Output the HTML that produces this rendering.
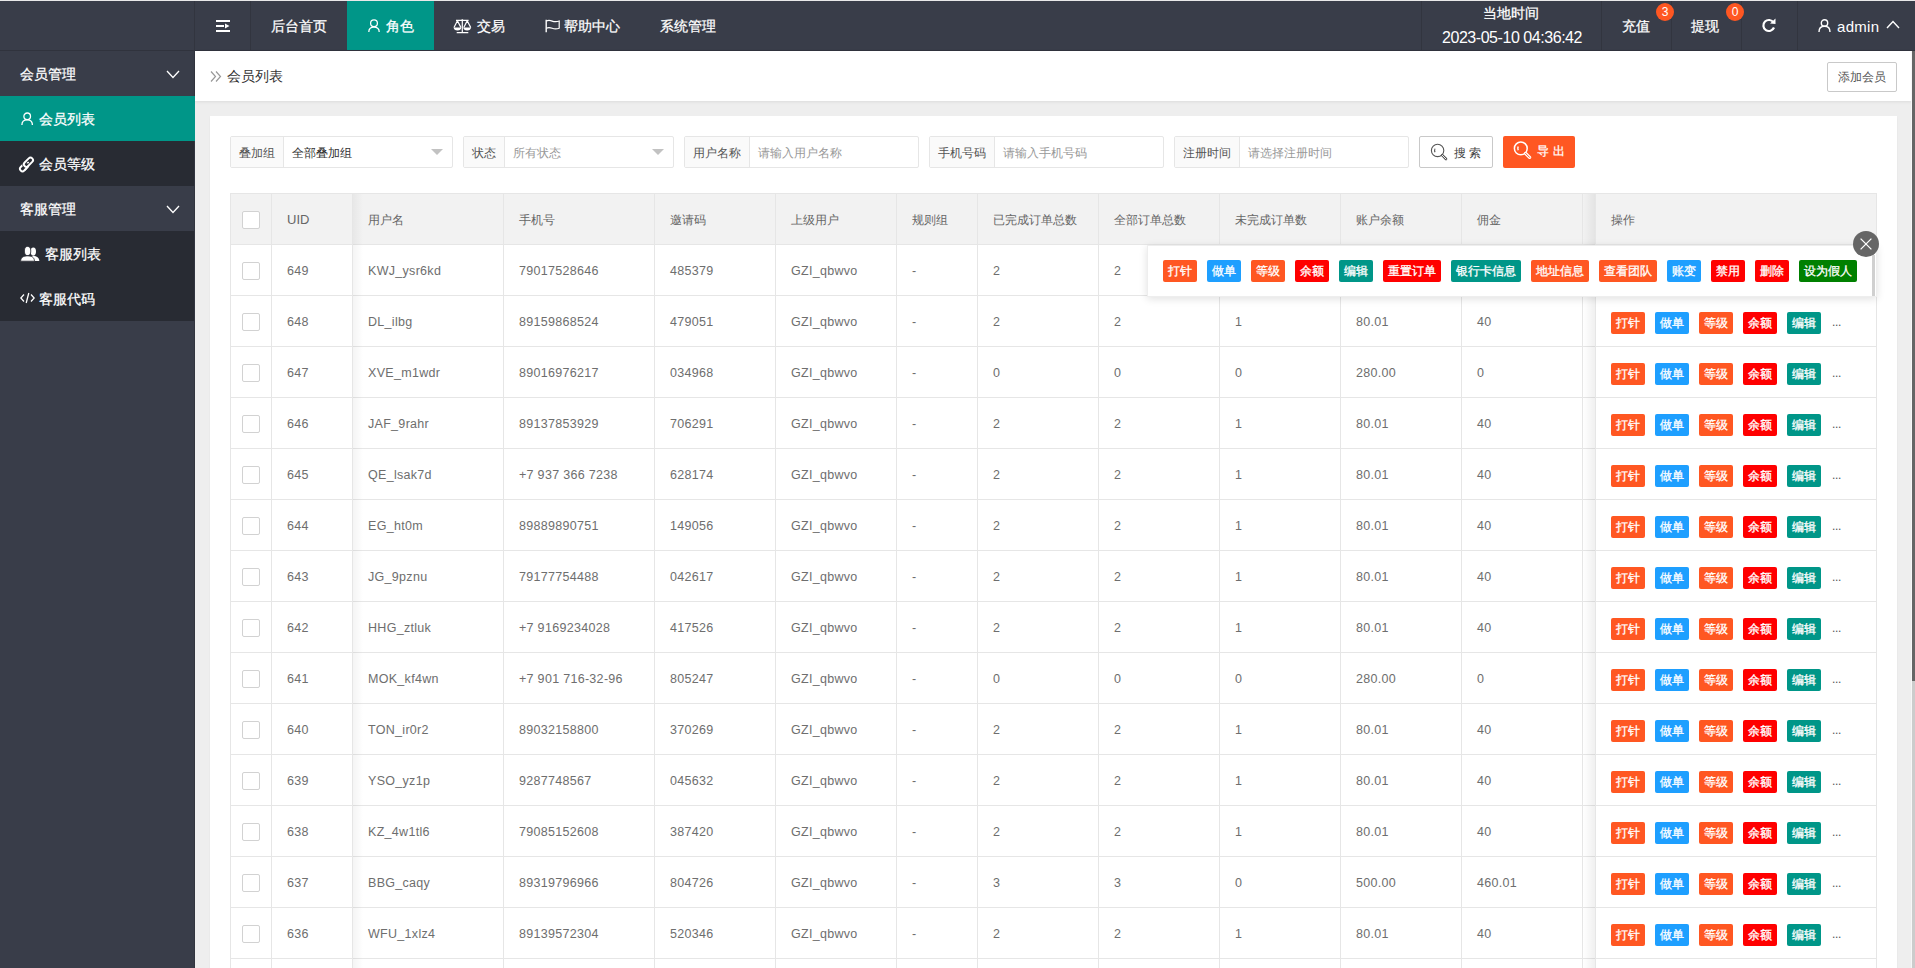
<!DOCTYPE html><html><head><meta charset="utf-8"><style>
*{margin:0;padding:0;box-sizing:border-box}
html,body{width:1915px;height:968px;overflow:hidden;background:#eeeeee;font-family:"Liberation Sans",sans-serif;color:#666}
.a{position:absolute}
.bx{position:absolute;height:22px;line-height:23px;font-size:12px;color:#fff;-webkit-text-stroke:0.3px #fff;text-align:center;border-radius:2px;white-space:nowrap}
.t{position:absolute;white-space:nowrap}
.cb{position:absolute;width:18px;height:18px;border:1px solid #d2d2d2;border-radius:2px;background:#fff}
.hl{position:absolute;height:1px;background:#e6e6e6}
.vl{position:absolute;width:1px;background:#e6e6e6}
.w{color:#fff;-webkit-text-stroke:0.25px #fff}
</style></head><body>

<div class="a" style="left:0;top:0;width:1915px;height:1px;background:#e9e9e9"></div>
<div class="a" style="left:0;top:1px;width:1915px;height:50px;background:#393D49"></div>
<div class="a" style="left:0;top:50px;width:1915px;height:1px;background:#30333d"></div>
<div class="a" style="left:0;top:51px;width:195px;height:917px;background:#393D49"></div>
<div class="a" style="left:194px;top:1px;width:1px;height:967px;background:#32353f"></div>
<div class="a" style="left:250px;top:1px;width:1px;height:49px;background:#32353f"></div>
<div class="a" style="left:1421px;top:1px;width:1px;height:49px;background:#32353f"></div>
<div class="a" style="left:1601px;top:1px;width:1px;height:49px;background:#32353f"></div>
<div class="a" style="left:1671px;top:1px;width:1px;height:49px;background:#32353f"></div>
<div class="a" style="left:1741px;top:1px;width:1px;height:49px;background:#32353f"></div>
<div class="a" style="left:1797px;top:1px;width:1px;height:49px;background:#32353f"></div>
<div class="a" style="left:347px;top:1px;width:87px;height:49px;background:#009688"></div>
<svg class="a" style="left:216px;top:19px" width="15" height="14" viewBox="0 0 15 14">
<rect x="0" y="1" width="14" height="2" fill="#fff"/><rect x="0" y="6" width="8" height="2" fill="#fff"/>
<path d="M9 4.5 L13.5 7 L9 9.5 Z" fill="#fff"/><rect x="0" y="11" width="14" height="2" fill="#fff"/></svg>
<div class="t w" style="left:271px;top:17px;font-size:14px;line-height:18px">后台首页</div>
<svg class="a" style="left:368px;top:19px" width="12" height="13" viewBox="0 0 12 13" fill="none" stroke="#fff" stroke-width="1.25">
<circle cx="6" cy="4.3" r="3.4"/><path d="M0.8 12.9 C0.8 9.7 3 8 6 8 C9 8 11.2 9.7 11.2 12.9"/></svg>
<div class="t w" style="left:386px;top:17px;font-size:14px;line-height:18px">角色</div>
<svg class="a" style="left:453px;top:19px" width="19" height="15" viewBox="0 0 19 15" fill="none" stroke="#fff" stroke-width="1.2">
<path d="M3 1.4 H15.6 M9.3 1.4 V13.5 M3.7 13.6 H15.3" /><circle cx="9.3" cy="1.3" r="1" fill="#fff" stroke="none"/>
<path d="M4.4 1.8 L1 8.6 M4.4 1.8 L8 8.6 M14.2 1.8 L10.8 8.6 M14.2 1.8 L17.8 8.6"/>
<path d="M0.6 8.4 H8.3 Q8 11.4 4.45 11.4 Q0.9 11.4 0.6 8.4 Z M10.3 8.4 H18 Q17.7 11.4 14.15 11.4 Q10.6 11.4 10.3 8.4 Z" fill="#fff" stroke="none"/></svg>
<div class="t w" style="left:477px;top:17px;font-size:14px;line-height:18px">交易</div>
<svg class="a" style="left:545px;top:19px" width="16" height="14" viewBox="0 0 16 14" fill="none" stroke="#fff" stroke-width="1.2">
<path d="M1.2 0.8 V13.2" stroke-width="1.4"/><path d="M1.2 2 Q4 0.9 7.2 2.1 Q10.6 3.3 14.2 2 V9.2 Q10.6 10.5 7.2 9.3 Q4 8.1 1.2 9.2"/></svg>
<div class="t w" style="left:564px;top:17px;font-size:14px;line-height:18px">帮助中心</div>
<div class="t w" style="left:660px;top:17px;font-size:14px;line-height:18px">系统管理</div>
<div class="t w" style="left:1483px;top:5px;font-size:14px;line-height:16px">当地时间</div>
<div class="t" style="color:#fff;left:1442px;top:30px;font-size:16px;line-height:16px;letter-spacing:-0.45px">2023-05-10 04:36:42</div>
<div class="t w" style="left:1622px;top:18px;font-size:14px;line-height:16px">充值</div>
<div class="a" style="left:1656px;top:3px;width:18px;height:18px;border-radius:9px;background:#FF5722;color:#fff;font-size:12px;line-height:18px;text-align:center">3</div>
<div class="t w" style="left:1691px;top:18px;font-size:14px;line-height:16px">提现</div>
<div class="a" style="left:1726px;top:3px;width:18px;height:18px;border-radius:9px;background:#FF5722;color:#fff;font-size:12px;line-height:18px;text-align:center">0</div>
<svg class="a" style="left:1761px;top:18px" width="16" height="15" viewBox="0 0 16 15" fill="none">
<path d="M12.5 4.5 A5.5 5.5 0 1 0 13 9.5" stroke="#fff" stroke-width="2.2"/><path d="M9 5.5 L14.5 6 L14.5 0.5 Z" fill="#fff"/></svg>
<svg class="a" style="left:1818px;top:19px" width="13" height="13" viewBox="0 0 13 13" fill="none" stroke="#fff" stroke-width="1.4">
<circle cx="6.5" cy="4" r="3.2"/><path d="M1 13 C1 9 3.5 7.3 6.5 7.3 C9.5 7.3 12 9 12 13"/></svg>
<div class="t" style="left:1837px;top:18px;font-size:15px;line-height:18px;color:#fff;letter-spacing:0.3px">admin</div>
<svg class="a" style="left:1886px;top:20px" width="14" height="9" viewBox="0 0 14 9" fill="none" stroke="#fff" stroke-width="1.4">
<path d="M1 8 L7 1.5 L13 8"/></svg>
<div class="a" style="left:0;top:51px;width:194px;height:45px;background:#393D49"></div>
<div class="a" style="left:0;top:141px;width:194px;height:45px;background:#282B33"></div>
<div class="a" style="left:0;top:186px;width:194px;height:45px;background:#393D49"></div>
<div class="a" style="left:0;top:231px;width:194px;height:45px;background:#282B33"></div>
<div class="a" style="left:0;top:276px;width:194px;height:45px;background:#282B33"></div>
<div class="a" style="left:0;top:96px;width:195px;height:45px;background:#009688"></div>
<div class="t w" style="left:20px;top:65px;font-size:14px;line-height:18px">会员管理</div>
<div class="t w" style="left:20px;top:200px;font-size:14px;line-height:18px">客服管理</div>
<svg class="a" style="left:166px;top:70px" width="14" height="9" viewBox="0 0 14 9" fill="none" stroke="#fff" stroke-width="1.3"><path d="M1 1 L7 7.5 L13 1"/></svg>
<svg class="a" style="left:166px;top:205px" width="14" height="9" viewBox="0 0 14 9" fill="none" stroke="#fff" stroke-width="1.3"><path d="M1 1 L7 7.5 L13 1"/></svg>
<svg class="a" style="left:21px;top:112px" width="12" height="13" viewBox="0 0 12 13" fill="none" stroke="#fff" stroke-width="1.3">
<circle cx="6.2" cy="4.3" r="3.3"/><path d="M0.9 13 C0.9 9.6 3.2 7.9 6.2 7.9 C9.2 7.9 11.4 9.6 11.4 13"/></svg>
<div class="t w" style="left:39px;top:110px;font-size:14px;line-height:18px">会员列表</div>
<svg class="a" style="left:18px;top:154px" width="19" height="19" viewBox="0 0 19 19" fill="none" stroke-width="1.9">
<g transform="translate(9.3 9.5) rotate(-45)">
<rect x="-9.6" y="-2.2" width="10.8" height="5" rx="2.5" stroke="#fff"/>
<path d="M-1.2 -2.6 H7.1 A2.5 2.5 0 0 1 7.1 2.4 H-1.2 A2.5 2.5 0 0 1 -1.2 -2.6" stroke="#282B33" stroke-width="3.4"/>
<rect x="-3.7" y="-2.6" width="10.8" height="5" rx="2.5" stroke="#fff"/>
<path d="M-6.5 2.8 H-1" stroke="#fff"/></g></svg>
<div class="t w" style="left:39px;top:155px;font-size:14px;line-height:18px">会员等级</div>
<svg class="a" style="left:20px;top:246px" width="20" height="16" viewBox="0 0 20 16" fill="#fff">
<ellipse cx="13.3" cy="5.6" rx="2.7" ry="4.1"/><path d="M10 15 C10 11.5 11.5 10 13.3 10 C16.8 10 19.2 11.8 19.3 15 Z"/>
<ellipse cx="7.6" cy="5" rx="3.2" ry="4.6" stroke="#282B33" stroke-width="0.8"/><path d="M0.6 15.2 C0.8 11.2 3.5 9.9 7.6 9.9 C11.7 9.9 14.3 11.2 14.5 15.2 Z" stroke="#282B33" stroke-width="0.8"/></svg>
<div class="t w" style="left:45px;top:245px;font-size:14px;line-height:18px">客服列表</div>
<svg class="a" style="left:20px;top:292px" width="15" height="12" viewBox="0 0 15 12" fill="none" stroke="#fff" stroke-width="1.3">
<path d="M4 2.5 L0.8 6 L4 9.5 M11 2.5 L14.2 6 L11 9.5 M8.8 1 L6.2 11"/></svg>
<div class="t w" style="left:39px;top:290px;font-size:14px;line-height:18px">客服代码</div>
<div class="a" style="left:195px;top:51px;width:1717px;height:50px;background:#fff;box-shadow:0 1px 3px rgba(0,0,0,.08)"></div>
<svg class="a" style="left:210px;top:71px" width="12" height="11" viewBox="0 0 12 11" fill="none" stroke="#999" stroke-width="1.2">
<path d="M1 0.5 L5.5 5.5 L1 10.5 M6 0.5 L10.5 5.5 L6 10.5"/></svg>
<div class="t" style="left:227px;top:67px;font-size:14px;line-height:18px;color:#333">会员列表</div>
<div class="a" style="left:1827px;top:62px;width:70px;height:30px;border:1px solid #C9C9C9;border-radius:2px;background:#fff;font-size:12px;line-height:28px;text-align:center;color:#555">添加会员</div>
<div class="a" style="left:210px;top:116px;width:1687px;height:900px;background:#fff;box-shadow:0 1px 2px rgba(0,0,0,.05)"></div>
<div class="a" style="left:230px;top:136px;width:223px;height:32px;border:1px solid #e6e6e6;border-radius:2px;background:#fff"></div>
<div class="a" style="left:231px;top:137px;width:53px;height:30px;background:#FAFAFA;border-right:1px solid #e6e6e6;font-size:12px;line-height:32px;text-align:center;color:#555">叠加组</div>
<div class="t" style="left:292px;top:138px;font-size:12px;line-height:30px;color:#333">全部叠加组</div>
<div class="a" style="left:431px;top:149px;width:0;height:0;border-left:6px solid transparent;border-right:6px solid transparent;border-top:6px solid #C2C2C2"></div>
<div class="a" style="left:463px;top:136px;width:211px;height:32px;border:1px solid #e6e6e6;border-radius:2px;background:#fff"></div>
<div class="a" style="left:464px;top:137px;width:41px;height:30px;background:#FAFAFA;border-right:1px solid #e6e6e6;font-size:12px;line-height:32px;text-align:center;color:#555">状态</div>
<div class="t" style="left:513px;top:138px;font-size:12px;line-height:30px;color:#999">所有状态</div>
<div class="a" style="left:652px;top:149px;width:0;height:0;border-left:6px solid transparent;border-right:6px solid transparent;border-top:6px solid #C2C2C2"></div>
<div class="a" style="left:684px;top:136px;width:235px;height:32px;border:1px solid #e6e6e6;border-radius:2px;background:#fff"></div>
<div class="a" style="left:685px;top:137px;width:65px;height:30px;background:#FAFAFA;border-right:1px solid #e6e6e6;font-size:12px;line-height:32px;text-align:center;color:#555">用户名称</div>
<div class="t" style="left:758px;top:138px;font-size:12px;line-height:30px;color:#999">请输入用户名称</div>
<div class="a" style="left:929px;top:136px;width:235px;height:32px;border:1px solid #e6e6e6;border-radius:2px;background:#fff"></div>
<div class="a" style="left:930px;top:137px;width:65px;height:30px;background:#FAFAFA;border-right:1px solid #e6e6e6;font-size:12px;line-height:32px;text-align:center;color:#555">手机号码</div>
<div class="t" style="left:1003px;top:138px;font-size:12px;line-height:30px;color:#999">请输入手机号码</div>
<div class="a" style="left:1174px;top:136px;width:235px;height:32px;border:1px solid #e6e6e6;border-radius:2px;background:#fff"></div>
<div class="a" style="left:1175px;top:137px;width:65px;height:30px;background:#FAFAFA;border-right:1px solid #e6e6e6;font-size:12px;line-height:32px;text-align:center;color:#555">注册时间</div>
<div class="t" style="left:1248px;top:138px;font-size:12px;line-height:30px;color:#999">请选择注册时间</div>
<div class="a" style="left:1419px;top:136px;width:74px;height:32px;border:1px solid #C9C9C9;border-radius:2px;background:#fff"></div>
<svg class="a" style="left:1430px;top:143px" width="18" height="18" viewBox="0 0 18 18" fill="none" stroke="#555" stroke-width="1.1">
<circle cx="7.6" cy="7.4" r="6.2"/><path d="M5 5.6 Q4.2 7.4 5 9.2"/><path d="M12.2 12.2 L16 16" stroke-width="2.6" stroke-linecap="round"/><path d="M12.2 12.2 L16 16" stroke="#fff" stroke-width="0.9" stroke-linecap="round"/></svg>
<div class="t" style="left:1454px;top:146px;font-size:12px;line-height:14px;color:#444">搜&nbsp;索</div>
<div class="a" style="left:1503px;top:136px;width:72px;height:32px;border-radius:2px;background:#FF5722"></div>
<svg class="a" style="left:1513px;top:141px" width="19" height="19" viewBox="0 0 19 19" fill="none" stroke="#fff" stroke-width="1.5">
<circle cx="7.8" cy="7.4" r="6.4"/><path d="M5.2 5.5 Q4.3 7.4 5.2 9.3"/><path d="M12.6 12.4 L16.6 16.4" stroke-width="3.2" stroke-linecap="round"/><path d="M12.6 12.4 L16.6 16.4" stroke="#FF5722" stroke-width="1" stroke-linecap="round"/></svg>
<div class="t w" style="left:1537px;top:144px;font-size:12px;line-height:14px;letter-spacing:4px">导出</div>
<div class="a" style="left:230px;top:193px;width:1647px;height:775px;border-left:1px solid #e6e6e6;border-top:1px solid #e6e6e6;border-right:1px solid #e6e6e6;background:#fff"></div>
<div class="a" style="left:231px;top:194px;width:1645px;height:50px;background:#f2f2f2"></div>
<div class="hl" style="left:230px;top:244px;width:1647px"></div>
<div class="hl" style="left:230px;top:295px;width:1647px"></div>
<div class="hl" style="left:230px;top:346px;width:1647px"></div>
<div class="hl" style="left:230px;top:397px;width:1647px"></div>
<div class="hl" style="left:230px;top:448px;width:1647px"></div>
<div class="hl" style="left:230px;top:499px;width:1647px"></div>
<div class="hl" style="left:230px;top:550px;width:1647px"></div>
<div class="hl" style="left:230px;top:601px;width:1647px"></div>
<div class="hl" style="left:230px;top:652px;width:1647px"></div>
<div class="hl" style="left:230px;top:703px;width:1647px"></div>
<div class="hl" style="left:230px;top:754px;width:1647px"></div>
<div class="hl" style="left:230px;top:805px;width:1647px"></div>
<div class="hl" style="left:230px;top:856px;width:1647px"></div>
<div class="hl" style="left:230px;top:907px;width:1647px"></div>
<div class="hl" style="left:230px;top:958px;width:1647px"></div>
<div class="hl" style="left:230px;top:1009px;width:1647px"></div>
<div class="vl" style="left:271px;top:193px;height:775px"></div>
<div class="vl" style="left:352px;top:193px;height:775px"></div>
<div class="vl" style="left:503px;top:193px;height:775px"></div>
<div class="vl" style="left:654px;top:193px;height:775px"></div>
<div class="vl" style="left:775px;top:193px;height:775px"></div>
<div class="vl" style="left:896px;top:193px;height:775px"></div>
<div class="vl" style="left:977px;top:193px;height:775px"></div>
<div class="vl" style="left:1098px;top:193px;height:775px"></div>
<div class="vl" style="left:1219px;top:193px;height:775px"></div>
<div class="vl" style="left:1340px;top:193px;height:775px"></div>
<div class="vl" style="left:1461px;top:193px;height:775px"></div>
<div class="vl" style="left:1582px;top:193px;height:775px"></div>
<div class="vl" style="left:1595px;top:193px;height:775px"></div>
<div class="a" style="left:353px;top:194px;width:10px;height:775px;background:linear-gradient(to right,rgba(0,0,0,.045),rgba(0,0,0,0))"></div>
<div class="a" style="left:1583px;top:194px;width:12px;height:50px;background:#f2f2f2"></div>
<div class="a" style="left:1583px;top:194px;width:12px;height:775px;background:linear-gradient(to left,rgba(0,0,0,.06),rgba(0,0,0,0))"></div>
<div class="cb" style="left:242px;top:211px"></div>
<div class="t" style="left:287px;top:195px;font-size:13px;line-height:50px;color:#666">UID</div>
<div class="t" style="left:368px;top:195px;font-size:12px;line-height:50px;color:#666">用户名</div>
<div class="t" style="left:519px;top:195px;font-size:12px;line-height:50px;color:#666">手机号</div>
<div class="t" style="left:670px;top:195px;font-size:12px;line-height:50px;color:#666">邀请码</div>
<div class="t" style="left:791px;top:195px;font-size:12px;line-height:50px;color:#666">上级用户</div>
<div class="t" style="left:912px;top:195px;font-size:12px;line-height:50px;color:#666">规则组</div>
<div class="t" style="left:993px;top:195px;font-size:12px;line-height:50px;color:#666">已完成订单总数</div>
<div class="t" style="left:1114px;top:195px;font-size:12px;line-height:50px;color:#666">全部订单总数</div>
<div class="t" style="left:1235px;top:195px;font-size:12px;line-height:50px;color:#666">未完成订单数</div>
<div class="t" style="left:1356px;top:195px;font-size:12px;line-height:50px;color:#666">账户余额</div>
<div class="t" style="left:1477px;top:195px;font-size:12px;line-height:50px;color:#666">佣金</div>
<div class="t" style="left:1611px;top:195px;font-size:12px;line-height:50px;color:#666">操作</div>
<div class="cb" style="left:242px;top:262px"></div>
<div class="t" style="left:287px;top:246px;font-size:12.5px;letter-spacing:0.3px;line-height:50px;color:#6e6e6e">649</div>
<div class="t" style="left:368px;top:246px;font-size:12.5px;letter-spacing:0.3px;line-height:50px;color:#6e6e6e">KWJ_ysr6kd</div>
<div class="t" style="left:519px;top:246px;font-size:12.5px;letter-spacing:0.3px;line-height:50px;color:#6e6e6e">79017528646</div>
<div class="t" style="left:670px;top:246px;font-size:12.5px;letter-spacing:0.3px;line-height:50px;color:#6e6e6e">485379</div>
<div class="t" style="left:791px;top:246px;font-size:12.5px;letter-spacing:0.3px;line-height:50px;color:#6e6e6e">GZI_qbwvo</div>
<div class="t" style="left:912px;top:246px;font-size:12.5px;letter-spacing:0.3px;line-height:50px;color:#6e6e6e">-</div>
<div class="t" style="left:993px;top:246px;font-size:12.5px;letter-spacing:0.3px;line-height:50px;color:#6e6e6e">2</div>
<div class="t" style="left:1114px;top:246px;font-size:12.5px;letter-spacing:0.3px;line-height:50px;color:#6e6e6e">2</div>
<div class="t" style="left:1235px;top:246px;font-size:12.5px;letter-spacing:0.3px;line-height:50px;color:#6e6e6e">1</div>
<div class="t" style="left:1356px;top:246px;font-size:12.5px;letter-spacing:0.3px;line-height:50px;color:#6e6e6e">80.01</div>
<div class="t" style="left:1477px;top:246px;font-size:12.5px;letter-spacing:0.3px;line-height:50px;color:#6e6e6e">40</div>
<div class="cb" style="left:242px;top:313px"></div>
<div class="t" style="left:287px;top:297px;font-size:12.5px;letter-spacing:0.3px;line-height:50px;color:#6e6e6e">648</div>
<div class="t" style="left:368px;top:297px;font-size:12.5px;letter-spacing:0.3px;line-height:50px;color:#6e6e6e">DL_ilbg</div>
<div class="t" style="left:519px;top:297px;font-size:12.5px;letter-spacing:0.3px;line-height:50px;color:#6e6e6e">89159868524</div>
<div class="t" style="left:670px;top:297px;font-size:12.5px;letter-spacing:0.3px;line-height:50px;color:#6e6e6e">479051</div>
<div class="t" style="left:791px;top:297px;font-size:12.5px;letter-spacing:0.3px;line-height:50px;color:#6e6e6e">GZI_qbwvo</div>
<div class="t" style="left:912px;top:297px;font-size:12.5px;letter-spacing:0.3px;line-height:50px;color:#6e6e6e">-</div>
<div class="t" style="left:993px;top:297px;font-size:12.5px;letter-spacing:0.3px;line-height:50px;color:#6e6e6e">2</div>
<div class="t" style="left:1114px;top:297px;font-size:12.5px;letter-spacing:0.3px;line-height:50px;color:#6e6e6e">2</div>
<div class="t" style="left:1235px;top:297px;font-size:12.5px;letter-spacing:0.3px;line-height:50px;color:#6e6e6e">1</div>
<div class="t" style="left:1356px;top:297px;font-size:12.5px;letter-spacing:0.3px;line-height:50px;color:#6e6e6e">80.01</div>
<div class="t" style="left:1477px;top:297px;font-size:12.5px;letter-spacing:0.3px;line-height:50px;color:#6e6e6e">40</div>
<div class="bx" style="left:1611px;top:312px;width:34px;background:#FF5722">打针</div>
<div class="bx" style="left:1655px;top:312px;width:34px;background:#1E9FFF">做单</div>
<div class="bx" style="left:1699px;top:312px;width:34px;background:#FF5722">等级</div>
<div class="bx" style="left:1743px;top:312px;width:34px;background:#FF0000">余额</div>
<div class="bx" style="left:1787px;top:312px;width:34px;background:#009688">编辑</div>
<div class="t" style="left:1832px;top:297px;font-size:12px;line-height:50px;color:#555;letter-spacing:-0.3px">...</div>
<div class="cb" style="left:242px;top:364px"></div>
<div class="t" style="left:287px;top:348px;font-size:12.5px;letter-spacing:0.3px;line-height:50px;color:#6e6e6e">647</div>
<div class="t" style="left:368px;top:348px;font-size:12.5px;letter-spacing:0.3px;line-height:50px;color:#6e6e6e">XVE_m1wdr</div>
<div class="t" style="left:519px;top:348px;font-size:12.5px;letter-spacing:0.3px;line-height:50px;color:#6e6e6e">89016976217</div>
<div class="t" style="left:670px;top:348px;font-size:12.5px;letter-spacing:0.3px;line-height:50px;color:#6e6e6e">034968</div>
<div class="t" style="left:791px;top:348px;font-size:12.5px;letter-spacing:0.3px;line-height:50px;color:#6e6e6e">GZI_qbwvo</div>
<div class="t" style="left:912px;top:348px;font-size:12.5px;letter-spacing:0.3px;line-height:50px;color:#6e6e6e">-</div>
<div class="t" style="left:993px;top:348px;font-size:12.5px;letter-spacing:0.3px;line-height:50px;color:#6e6e6e">0</div>
<div class="t" style="left:1114px;top:348px;font-size:12.5px;letter-spacing:0.3px;line-height:50px;color:#6e6e6e">0</div>
<div class="t" style="left:1235px;top:348px;font-size:12.5px;letter-spacing:0.3px;line-height:50px;color:#6e6e6e">0</div>
<div class="t" style="left:1356px;top:348px;font-size:12.5px;letter-spacing:0.3px;line-height:50px;color:#6e6e6e">280.00</div>
<div class="t" style="left:1477px;top:348px;font-size:12.5px;letter-spacing:0.3px;line-height:50px;color:#6e6e6e">0</div>
<div class="bx" style="left:1611px;top:363px;width:34px;background:#FF5722">打针</div>
<div class="bx" style="left:1655px;top:363px;width:34px;background:#1E9FFF">做单</div>
<div class="bx" style="left:1699px;top:363px;width:34px;background:#FF5722">等级</div>
<div class="bx" style="left:1743px;top:363px;width:34px;background:#FF0000">余额</div>
<div class="bx" style="left:1787px;top:363px;width:34px;background:#009688">编辑</div>
<div class="t" style="left:1832px;top:348px;font-size:12px;line-height:50px;color:#555;letter-spacing:-0.3px">...</div>
<div class="cb" style="left:242px;top:415px"></div>
<div class="t" style="left:287px;top:399px;font-size:12.5px;letter-spacing:0.3px;line-height:50px;color:#6e6e6e">646</div>
<div class="t" style="left:368px;top:399px;font-size:12.5px;letter-spacing:0.3px;line-height:50px;color:#6e6e6e">JAF_9rahr</div>
<div class="t" style="left:519px;top:399px;font-size:12.5px;letter-spacing:0.3px;line-height:50px;color:#6e6e6e">89137853929</div>
<div class="t" style="left:670px;top:399px;font-size:12.5px;letter-spacing:0.3px;line-height:50px;color:#6e6e6e">706291</div>
<div class="t" style="left:791px;top:399px;font-size:12.5px;letter-spacing:0.3px;line-height:50px;color:#6e6e6e">GZI_qbwvo</div>
<div class="t" style="left:912px;top:399px;font-size:12.5px;letter-spacing:0.3px;line-height:50px;color:#6e6e6e">-</div>
<div class="t" style="left:993px;top:399px;font-size:12.5px;letter-spacing:0.3px;line-height:50px;color:#6e6e6e">2</div>
<div class="t" style="left:1114px;top:399px;font-size:12.5px;letter-spacing:0.3px;line-height:50px;color:#6e6e6e">2</div>
<div class="t" style="left:1235px;top:399px;font-size:12.5px;letter-spacing:0.3px;line-height:50px;color:#6e6e6e">1</div>
<div class="t" style="left:1356px;top:399px;font-size:12.5px;letter-spacing:0.3px;line-height:50px;color:#6e6e6e">80.01</div>
<div class="t" style="left:1477px;top:399px;font-size:12.5px;letter-spacing:0.3px;line-height:50px;color:#6e6e6e">40</div>
<div class="bx" style="left:1611px;top:414px;width:34px;background:#FF5722">打针</div>
<div class="bx" style="left:1655px;top:414px;width:34px;background:#1E9FFF">做单</div>
<div class="bx" style="left:1699px;top:414px;width:34px;background:#FF5722">等级</div>
<div class="bx" style="left:1743px;top:414px;width:34px;background:#FF0000">余额</div>
<div class="bx" style="left:1787px;top:414px;width:34px;background:#009688">编辑</div>
<div class="t" style="left:1832px;top:399px;font-size:12px;line-height:50px;color:#555;letter-spacing:-0.3px">...</div>
<div class="cb" style="left:242px;top:466px"></div>
<div class="t" style="left:287px;top:450px;font-size:12.5px;letter-spacing:0.3px;line-height:50px;color:#6e6e6e">645</div>
<div class="t" style="left:368px;top:450px;font-size:12.5px;letter-spacing:0.3px;line-height:50px;color:#6e6e6e">QE_lsak7d</div>
<div class="t" style="left:519px;top:450px;font-size:12.5px;letter-spacing:0.3px;line-height:50px;color:#6e6e6e">+7 937 366 7238</div>
<div class="t" style="left:670px;top:450px;font-size:12.5px;letter-spacing:0.3px;line-height:50px;color:#6e6e6e">628174</div>
<div class="t" style="left:791px;top:450px;font-size:12.5px;letter-spacing:0.3px;line-height:50px;color:#6e6e6e">GZI_qbwvo</div>
<div class="t" style="left:912px;top:450px;font-size:12.5px;letter-spacing:0.3px;line-height:50px;color:#6e6e6e">-</div>
<div class="t" style="left:993px;top:450px;font-size:12.5px;letter-spacing:0.3px;line-height:50px;color:#6e6e6e">2</div>
<div class="t" style="left:1114px;top:450px;font-size:12.5px;letter-spacing:0.3px;line-height:50px;color:#6e6e6e">2</div>
<div class="t" style="left:1235px;top:450px;font-size:12.5px;letter-spacing:0.3px;line-height:50px;color:#6e6e6e">1</div>
<div class="t" style="left:1356px;top:450px;font-size:12.5px;letter-spacing:0.3px;line-height:50px;color:#6e6e6e">80.01</div>
<div class="t" style="left:1477px;top:450px;font-size:12.5px;letter-spacing:0.3px;line-height:50px;color:#6e6e6e">40</div>
<div class="bx" style="left:1611px;top:465px;width:34px;background:#FF5722">打针</div>
<div class="bx" style="left:1655px;top:465px;width:34px;background:#1E9FFF">做单</div>
<div class="bx" style="left:1699px;top:465px;width:34px;background:#FF5722">等级</div>
<div class="bx" style="left:1743px;top:465px;width:34px;background:#FF0000">余额</div>
<div class="bx" style="left:1787px;top:465px;width:34px;background:#009688">编辑</div>
<div class="t" style="left:1832px;top:450px;font-size:12px;line-height:50px;color:#555;letter-spacing:-0.3px">...</div>
<div class="cb" style="left:242px;top:517px"></div>
<div class="t" style="left:287px;top:501px;font-size:12.5px;letter-spacing:0.3px;line-height:50px;color:#6e6e6e">644</div>
<div class="t" style="left:368px;top:501px;font-size:12.5px;letter-spacing:0.3px;line-height:50px;color:#6e6e6e">EG_ht0m</div>
<div class="t" style="left:519px;top:501px;font-size:12.5px;letter-spacing:0.3px;line-height:50px;color:#6e6e6e">89889890751</div>
<div class="t" style="left:670px;top:501px;font-size:12.5px;letter-spacing:0.3px;line-height:50px;color:#6e6e6e">149056</div>
<div class="t" style="left:791px;top:501px;font-size:12.5px;letter-spacing:0.3px;line-height:50px;color:#6e6e6e">GZI_qbwvo</div>
<div class="t" style="left:912px;top:501px;font-size:12.5px;letter-spacing:0.3px;line-height:50px;color:#6e6e6e">-</div>
<div class="t" style="left:993px;top:501px;font-size:12.5px;letter-spacing:0.3px;line-height:50px;color:#6e6e6e">2</div>
<div class="t" style="left:1114px;top:501px;font-size:12.5px;letter-spacing:0.3px;line-height:50px;color:#6e6e6e">2</div>
<div class="t" style="left:1235px;top:501px;font-size:12.5px;letter-spacing:0.3px;line-height:50px;color:#6e6e6e">1</div>
<div class="t" style="left:1356px;top:501px;font-size:12.5px;letter-spacing:0.3px;line-height:50px;color:#6e6e6e">80.01</div>
<div class="t" style="left:1477px;top:501px;font-size:12.5px;letter-spacing:0.3px;line-height:50px;color:#6e6e6e">40</div>
<div class="bx" style="left:1611px;top:516px;width:34px;background:#FF5722">打针</div>
<div class="bx" style="left:1655px;top:516px;width:34px;background:#1E9FFF">做单</div>
<div class="bx" style="left:1699px;top:516px;width:34px;background:#FF5722">等级</div>
<div class="bx" style="left:1743px;top:516px;width:34px;background:#FF0000">余额</div>
<div class="bx" style="left:1787px;top:516px;width:34px;background:#009688">编辑</div>
<div class="t" style="left:1832px;top:501px;font-size:12px;line-height:50px;color:#555;letter-spacing:-0.3px">...</div>
<div class="cb" style="left:242px;top:568px"></div>
<div class="t" style="left:287px;top:552px;font-size:12.5px;letter-spacing:0.3px;line-height:50px;color:#6e6e6e">643</div>
<div class="t" style="left:368px;top:552px;font-size:12.5px;letter-spacing:0.3px;line-height:50px;color:#6e6e6e">JG_9pznu</div>
<div class="t" style="left:519px;top:552px;font-size:12.5px;letter-spacing:0.3px;line-height:50px;color:#6e6e6e">79177754488</div>
<div class="t" style="left:670px;top:552px;font-size:12.5px;letter-spacing:0.3px;line-height:50px;color:#6e6e6e">042617</div>
<div class="t" style="left:791px;top:552px;font-size:12.5px;letter-spacing:0.3px;line-height:50px;color:#6e6e6e">GZI_qbwvo</div>
<div class="t" style="left:912px;top:552px;font-size:12.5px;letter-spacing:0.3px;line-height:50px;color:#6e6e6e">-</div>
<div class="t" style="left:993px;top:552px;font-size:12.5px;letter-spacing:0.3px;line-height:50px;color:#6e6e6e">2</div>
<div class="t" style="left:1114px;top:552px;font-size:12.5px;letter-spacing:0.3px;line-height:50px;color:#6e6e6e">2</div>
<div class="t" style="left:1235px;top:552px;font-size:12.5px;letter-spacing:0.3px;line-height:50px;color:#6e6e6e">1</div>
<div class="t" style="left:1356px;top:552px;font-size:12.5px;letter-spacing:0.3px;line-height:50px;color:#6e6e6e">80.01</div>
<div class="t" style="left:1477px;top:552px;font-size:12.5px;letter-spacing:0.3px;line-height:50px;color:#6e6e6e">40</div>
<div class="bx" style="left:1611px;top:567px;width:34px;background:#FF5722">打针</div>
<div class="bx" style="left:1655px;top:567px;width:34px;background:#1E9FFF">做单</div>
<div class="bx" style="left:1699px;top:567px;width:34px;background:#FF5722">等级</div>
<div class="bx" style="left:1743px;top:567px;width:34px;background:#FF0000">余额</div>
<div class="bx" style="left:1787px;top:567px;width:34px;background:#009688">编辑</div>
<div class="t" style="left:1832px;top:552px;font-size:12px;line-height:50px;color:#555;letter-spacing:-0.3px">...</div>
<div class="cb" style="left:242px;top:619px"></div>
<div class="t" style="left:287px;top:603px;font-size:12.5px;letter-spacing:0.3px;line-height:50px;color:#6e6e6e">642</div>
<div class="t" style="left:368px;top:603px;font-size:12.5px;letter-spacing:0.3px;line-height:50px;color:#6e6e6e">HHG_ztluk</div>
<div class="t" style="left:519px;top:603px;font-size:12.5px;letter-spacing:0.3px;line-height:50px;color:#6e6e6e">+7 9169234028</div>
<div class="t" style="left:670px;top:603px;font-size:12.5px;letter-spacing:0.3px;line-height:50px;color:#6e6e6e">417526</div>
<div class="t" style="left:791px;top:603px;font-size:12.5px;letter-spacing:0.3px;line-height:50px;color:#6e6e6e">GZI_qbwvo</div>
<div class="t" style="left:912px;top:603px;font-size:12.5px;letter-spacing:0.3px;line-height:50px;color:#6e6e6e">-</div>
<div class="t" style="left:993px;top:603px;font-size:12.5px;letter-spacing:0.3px;line-height:50px;color:#6e6e6e">2</div>
<div class="t" style="left:1114px;top:603px;font-size:12.5px;letter-spacing:0.3px;line-height:50px;color:#6e6e6e">2</div>
<div class="t" style="left:1235px;top:603px;font-size:12.5px;letter-spacing:0.3px;line-height:50px;color:#6e6e6e">1</div>
<div class="t" style="left:1356px;top:603px;font-size:12.5px;letter-spacing:0.3px;line-height:50px;color:#6e6e6e">80.01</div>
<div class="t" style="left:1477px;top:603px;font-size:12.5px;letter-spacing:0.3px;line-height:50px;color:#6e6e6e">40</div>
<div class="bx" style="left:1611px;top:618px;width:34px;background:#FF5722">打针</div>
<div class="bx" style="left:1655px;top:618px;width:34px;background:#1E9FFF">做单</div>
<div class="bx" style="left:1699px;top:618px;width:34px;background:#FF5722">等级</div>
<div class="bx" style="left:1743px;top:618px;width:34px;background:#FF0000">余额</div>
<div class="bx" style="left:1787px;top:618px;width:34px;background:#009688">编辑</div>
<div class="t" style="left:1832px;top:603px;font-size:12px;line-height:50px;color:#555;letter-spacing:-0.3px">...</div>
<div class="cb" style="left:242px;top:670px"></div>
<div class="t" style="left:287px;top:654px;font-size:12.5px;letter-spacing:0.3px;line-height:50px;color:#6e6e6e">641</div>
<div class="t" style="left:368px;top:654px;font-size:12.5px;letter-spacing:0.3px;line-height:50px;color:#6e6e6e">MOK_kf4wn</div>
<div class="t" style="left:519px;top:654px;font-size:12.5px;letter-spacing:0.3px;line-height:50px;color:#6e6e6e">+7 901 716-32-96</div>
<div class="t" style="left:670px;top:654px;font-size:12.5px;letter-spacing:0.3px;line-height:50px;color:#6e6e6e">805247</div>
<div class="t" style="left:791px;top:654px;font-size:12.5px;letter-spacing:0.3px;line-height:50px;color:#6e6e6e">GZI_qbwvo</div>
<div class="t" style="left:912px;top:654px;font-size:12.5px;letter-spacing:0.3px;line-height:50px;color:#6e6e6e">-</div>
<div class="t" style="left:993px;top:654px;font-size:12.5px;letter-spacing:0.3px;line-height:50px;color:#6e6e6e">0</div>
<div class="t" style="left:1114px;top:654px;font-size:12.5px;letter-spacing:0.3px;line-height:50px;color:#6e6e6e">0</div>
<div class="t" style="left:1235px;top:654px;font-size:12.5px;letter-spacing:0.3px;line-height:50px;color:#6e6e6e">0</div>
<div class="t" style="left:1356px;top:654px;font-size:12.5px;letter-spacing:0.3px;line-height:50px;color:#6e6e6e">280.00</div>
<div class="t" style="left:1477px;top:654px;font-size:12.5px;letter-spacing:0.3px;line-height:50px;color:#6e6e6e">0</div>
<div class="bx" style="left:1611px;top:669px;width:34px;background:#FF5722">打针</div>
<div class="bx" style="left:1655px;top:669px;width:34px;background:#1E9FFF">做单</div>
<div class="bx" style="left:1699px;top:669px;width:34px;background:#FF5722">等级</div>
<div class="bx" style="left:1743px;top:669px;width:34px;background:#FF0000">余额</div>
<div class="bx" style="left:1787px;top:669px;width:34px;background:#009688">编辑</div>
<div class="t" style="left:1832px;top:654px;font-size:12px;line-height:50px;color:#555;letter-spacing:-0.3px">...</div>
<div class="cb" style="left:242px;top:721px"></div>
<div class="t" style="left:287px;top:705px;font-size:12.5px;letter-spacing:0.3px;line-height:50px;color:#6e6e6e">640</div>
<div class="t" style="left:368px;top:705px;font-size:12.5px;letter-spacing:0.3px;line-height:50px;color:#6e6e6e">TON_ir0r2</div>
<div class="t" style="left:519px;top:705px;font-size:12.5px;letter-spacing:0.3px;line-height:50px;color:#6e6e6e">89032158800</div>
<div class="t" style="left:670px;top:705px;font-size:12.5px;letter-spacing:0.3px;line-height:50px;color:#6e6e6e">370269</div>
<div class="t" style="left:791px;top:705px;font-size:12.5px;letter-spacing:0.3px;line-height:50px;color:#6e6e6e">GZI_qbwvo</div>
<div class="t" style="left:912px;top:705px;font-size:12.5px;letter-spacing:0.3px;line-height:50px;color:#6e6e6e">-</div>
<div class="t" style="left:993px;top:705px;font-size:12.5px;letter-spacing:0.3px;line-height:50px;color:#6e6e6e">2</div>
<div class="t" style="left:1114px;top:705px;font-size:12.5px;letter-spacing:0.3px;line-height:50px;color:#6e6e6e">2</div>
<div class="t" style="left:1235px;top:705px;font-size:12.5px;letter-spacing:0.3px;line-height:50px;color:#6e6e6e">1</div>
<div class="t" style="left:1356px;top:705px;font-size:12.5px;letter-spacing:0.3px;line-height:50px;color:#6e6e6e">80.01</div>
<div class="t" style="left:1477px;top:705px;font-size:12.5px;letter-spacing:0.3px;line-height:50px;color:#6e6e6e">40</div>
<div class="bx" style="left:1611px;top:720px;width:34px;background:#FF5722">打针</div>
<div class="bx" style="left:1655px;top:720px;width:34px;background:#1E9FFF">做单</div>
<div class="bx" style="left:1699px;top:720px;width:34px;background:#FF5722">等级</div>
<div class="bx" style="left:1743px;top:720px;width:34px;background:#FF0000">余额</div>
<div class="bx" style="left:1787px;top:720px;width:34px;background:#009688">编辑</div>
<div class="t" style="left:1832px;top:705px;font-size:12px;line-height:50px;color:#555;letter-spacing:-0.3px">...</div>
<div class="cb" style="left:242px;top:772px"></div>
<div class="t" style="left:287px;top:756px;font-size:12.5px;letter-spacing:0.3px;line-height:50px;color:#6e6e6e">639</div>
<div class="t" style="left:368px;top:756px;font-size:12.5px;letter-spacing:0.3px;line-height:50px;color:#6e6e6e">YSO_yz1p</div>
<div class="t" style="left:519px;top:756px;font-size:12.5px;letter-spacing:0.3px;line-height:50px;color:#6e6e6e">9287748567</div>
<div class="t" style="left:670px;top:756px;font-size:12.5px;letter-spacing:0.3px;line-height:50px;color:#6e6e6e">045632</div>
<div class="t" style="left:791px;top:756px;font-size:12.5px;letter-spacing:0.3px;line-height:50px;color:#6e6e6e">GZI_qbwvo</div>
<div class="t" style="left:912px;top:756px;font-size:12.5px;letter-spacing:0.3px;line-height:50px;color:#6e6e6e">-</div>
<div class="t" style="left:993px;top:756px;font-size:12.5px;letter-spacing:0.3px;line-height:50px;color:#6e6e6e">2</div>
<div class="t" style="left:1114px;top:756px;font-size:12.5px;letter-spacing:0.3px;line-height:50px;color:#6e6e6e">2</div>
<div class="t" style="left:1235px;top:756px;font-size:12.5px;letter-spacing:0.3px;line-height:50px;color:#6e6e6e">1</div>
<div class="t" style="left:1356px;top:756px;font-size:12.5px;letter-spacing:0.3px;line-height:50px;color:#6e6e6e">80.01</div>
<div class="t" style="left:1477px;top:756px;font-size:12.5px;letter-spacing:0.3px;line-height:50px;color:#6e6e6e">40</div>
<div class="bx" style="left:1611px;top:771px;width:34px;background:#FF5722">打针</div>
<div class="bx" style="left:1655px;top:771px;width:34px;background:#1E9FFF">做单</div>
<div class="bx" style="left:1699px;top:771px;width:34px;background:#FF5722">等级</div>
<div class="bx" style="left:1743px;top:771px;width:34px;background:#FF0000">余额</div>
<div class="bx" style="left:1787px;top:771px;width:34px;background:#009688">编辑</div>
<div class="t" style="left:1832px;top:756px;font-size:12px;line-height:50px;color:#555;letter-spacing:-0.3px">...</div>
<div class="cb" style="left:242px;top:823px"></div>
<div class="t" style="left:287px;top:807px;font-size:12.5px;letter-spacing:0.3px;line-height:50px;color:#6e6e6e">638</div>
<div class="t" style="left:368px;top:807px;font-size:12.5px;letter-spacing:0.3px;line-height:50px;color:#6e6e6e">KZ_4w1tl6</div>
<div class="t" style="left:519px;top:807px;font-size:12.5px;letter-spacing:0.3px;line-height:50px;color:#6e6e6e">79085152608</div>
<div class="t" style="left:670px;top:807px;font-size:12.5px;letter-spacing:0.3px;line-height:50px;color:#6e6e6e">387420</div>
<div class="t" style="left:791px;top:807px;font-size:12.5px;letter-spacing:0.3px;line-height:50px;color:#6e6e6e">GZI_qbwvo</div>
<div class="t" style="left:912px;top:807px;font-size:12.5px;letter-spacing:0.3px;line-height:50px;color:#6e6e6e">-</div>
<div class="t" style="left:993px;top:807px;font-size:12.5px;letter-spacing:0.3px;line-height:50px;color:#6e6e6e">2</div>
<div class="t" style="left:1114px;top:807px;font-size:12.5px;letter-spacing:0.3px;line-height:50px;color:#6e6e6e">2</div>
<div class="t" style="left:1235px;top:807px;font-size:12.5px;letter-spacing:0.3px;line-height:50px;color:#6e6e6e">1</div>
<div class="t" style="left:1356px;top:807px;font-size:12.5px;letter-spacing:0.3px;line-height:50px;color:#6e6e6e">80.01</div>
<div class="t" style="left:1477px;top:807px;font-size:12.5px;letter-spacing:0.3px;line-height:50px;color:#6e6e6e">40</div>
<div class="bx" style="left:1611px;top:822px;width:34px;background:#FF5722">打针</div>
<div class="bx" style="left:1655px;top:822px;width:34px;background:#1E9FFF">做单</div>
<div class="bx" style="left:1699px;top:822px;width:34px;background:#FF5722">等级</div>
<div class="bx" style="left:1743px;top:822px;width:34px;background:#FF0000">余额</div>
<div class="bx" style="left:1787px;top:822px;width:34px;background:#009688">编辑</div>
<div class="t" style="left:1832px;top:807px;font-size:12px;line-height:50px;color:#555;letter-spacing:-0.3px">...</div>
<div class="cb" style="left:242px;top:874px"></div>
<div class="t" style="left:287px;top:858px;font-size:12.5px;letter-spacing:0.3px;line-height:50px;color:#6e6e6e">637</div>
<div class="t" style="left:368px;top:858px;font-size:12.5px;letter-spacing:0.3px;line-height:50px;color:#6e6e6e">BBG_caqy</div>
<div class="t" style="left:519px;top:858px;font-size:12.5px;letter-spacing:0.3px;line-height:50px;color:#6e6e6e">89319796966</div>
<div class="t" style="left:670px;top:858px;font-size:12.5px;letter-spacing:0.3px;line-height:50px;color:#6e6e6e">804726</div>
<div class="t" style="left:791px;top:858px;font-size:12.5px;letter-spacing:0.3px;line-height:50px;color:#6e6e6e">GZI_qbwvo</div>
<div class="t" style="left:912px;top:858px;font-size:12.5px;letter-spacing:0.3px;line-height:50px;color:#6e6e6e">-</div>
<div class="t" style="left:993px;top:858px;font-size:12.5px;letter-spacing:0.3px;line-height:50px;color:#6e6e6e">3</div>
<div class="t" style="left:1114px;top:858px;font-size:12.5px;letter-spacing:0.3px;line-height:50px;color:#6e6e6e">3</div>
<div class="t" style="left:1235px;top:858px;font-size:12.5px;letter-spacing:0.3px;line-height:50px;color:#6e6e6e">0</div>
<div class="t" style="left:1356px;top:858px;font-size:12.5px;letter-spacing:0.3px;line-height:50px;color:#6e6e6e">500.00</div>
<div class="t" style="left:1477px;top:858px;font-size:12.5px;letter-spacing:0.3px;line-height:50px;color:#6e6e6e">460.01</div>
<div class="bx" style="left:1611px;top:873px;width:34px;background:#FF5722">打针</div>
<div class="bx" style="left:1655px;top:873px;width:34px;background:#1E9FFF">做单</div>
<div class="bx" style="left:1699px;top:873px;width:34px;background:#FF5722">等级</div>
<div class="bx" style="left:1743px;top:873px;width:34px;background:#FF0000">余额</div>
<div class="bx" style="left:1787px;top:873px;width:34px;background:#009688">编辑</div>
<div class="t" style="left:1832px;top:858px;font-size:12px;line-height:50px;color:#555;letter-spacing:-0.3px">...</div>
<div class="cb" style="left:242px;top:925px"></div>
<div class="t" style="left:287px;top:909px;font-size:12.5px;letter-spacing:0.3px;line-height:50px;color:#6e6e6e">636</div>
<div class="t" style="left:368px;top:909px;font-size:12.5px;letter-spacing:0.3px;line-height:50px;color:#6e6e6e">WFU_1xlz4</div>
<div class="t" style="left:519px;top:909px;font-size:12.5px;letter-spacing:0.3px;line-height:50px;color:#6e6e6e">89139572304</div>
<div class="t" style="left:670px;top:909px;font-size:12.5px;letter-spacing:0.3px;line-height:50px;color:#6e6e6e">520346</div>
<div class="t" style="left:791px;top:909px;font-size:12.5px;letter-spacing:0.3px;line-height:50px;color:#6e6e6e">GZI_qbwvo</div>
<div class="t" style="left:912px;top:909px;font-size:12.5px;letter-spacing:0.3px;line-height:50px;color:#6e6e6e">-</div>
<div class="t" style="left:993px;top:909px;font-size:12.5px;letter-spacing:0.3px;line-height:50px;color:#6e6e6e">2</div>
<div class="t" style="left:1114px;top:909px;font-size:12.5px;letter-spacing:0.3px;line-height:50px;color:#6e6e6e">2</div>
<div class="t" style="left:1235px;top:909px;font-size:12.5px;letter-spacing:0.3px;line-height:50px;color:#6e6e6e">1</div>
<div class="t" style="left:1356px;top:909px;font-size:12.5px;letter-spacing:0.3px;line-height:50px;color:#6e6e6e">80.01</div>
<div class="t" style="left:1477px;top:909px;font-size:12.5px;letter-spacing:0.3px;line-height:50px;color:#6e6e6e">40</div>
<div class="bx" style="left:1611px;top:924px;width:34px;background:#FF5722">打针</div>
<div class="bx" style="left:1655px;top:924px;width:34px;background:#1E9FFF">做单</div>
<div class="bx" style="left:1699px;top:924px;width:34px;background:#FF5722">等级</div>
<div class="bx" style="left:1743px;top:924px;width:34px;background:#FF0000">余额</div>
<div class="bx" style="left:1787px;top:924px;width:34px;background:#009688">编辑</div>
<div class="t" style="left:1832px;top:909px;font-size:12px;line-height:50px;color:#555;letter-spacing:-0.3px">...</div>
<div class="cb" style="left:242px;top:976px"></div>
<div class="t" style="left:287px;top:960px;font-size:12.5px;letter-spacing:0.3px;line-height:50px;color:#6e6e6e">635</div>
<div class="t" style="left:368px;top:960px;font-size:12.5px;letter-spacing:0.3px;line-height:50px;color:#6e6e6e">ABC_xyz</div>
<div class="t" style="left:519px;top:960px;font-size:12.5px;letter-spacing:0.3px;line-height:50px;color:#6e6e6e">89000000000</div>
<div class="t" style="left:670px;top:960px;font-size:12.5px;letter-spacing:0.3px;line-height:50px;color:#6e6e6e">000000</div>
<div class="t" style="left:791px;top:960px;font-size:12.5px;letter-spacing:0.3px;line-height:50px;color:#6e6e6e">GZI_qbwvo</div>
<div class="t" style="left:912px;top:960px;font-size:12.5px;letter-spacing:0.3px;line-height:50px;color:#6e6e6e">-</div>
<div class="t" style="left:993px;top:960px;font-size:12.5px;letter-spacing:0.3px;line-height:50px;color:#6e6e6e">2</div>
<div class="t" style="left:1114px;top:960px;font-size:12.5px;letter-spacing:0.3px;line-height:50px;color:#6e6e6e">2</div>
<div class="t" style="left:1235px;top:960px;font-size:12.5px;letter-spacing:0.3px;line-height:50px;color:#6e6e6e">1</div>
<div class="t" style="left:1356px;top:960px;font-size:12.5px;letter-spacing:0.3px;line-height:50px;color:#6e6e6e">80.01</div>
<div class="t" style="left:1477px;top:960px;font-size:12.5px;letter-spacing:0.3px;line-height:50px;color:#6e6e6e">40</div>
<div class="bx" style="left:1611px;top:975px;width:34px;background:#FF5722">打针</div>
<div class="bx" style="left:1655px;top:975px;width:34px;background:#1E9FFF">做单</div>
<div class="bx" style="left:1699px;top:975px;width:34px;background:#FF5722">等级</div>
<div class="bx" style="left:1743px;top:975px;width:34px;background:#FF0000">余额</div>
<div class="bx" style="left:1787px;top:975px;width:34px;background:#009688">编辑</div>
<div class="t" style="left:1832px;top:960px;font-size:12px;line-height:50px;color:#555;letter-spacing:-0.3px">...</div>
<div class="a" style="left:1147px;top:245px;width:730px;height:52px;background:#fff;border:1px solid #eee;box-shadow:0 2px 8px rgba(0,0,0,.12)"></div>
<div class="a" style="left:1872px;top:255px;width:3px;height:41px;background:#d0d0d0"></div>
<div class="bx" style="left:1163px;top:260px;width:34px;background:#FF5722">打针</div>
<div class="bx" style="left:1207px;top:260px;width:34px;background:#1E9FFF">做单</div>
<div class="bx" style="left:1251px;top:260px;width:34px;background:#FF5722">等级</div>
<div class="bx" style="left:1295px;top:260px;width:34px;background:#FF0000">余额</div>
<div class="bx" style="left:1339px;top:260px;width:34px;background:#009688">编辑</div>
<div class="bx" style="left:1383px;top:260px;width:58px;background:#FF0000">重置订单</div>
<div class="bx" style="left:1451px;top:260px;width:70px;background:#009688">银行卡信息</div>
<div class="bx" style="left:1531px;top:260px;width:58px;background:#FF5722">地址信息</div>
<div class="bx" style="left:1599px;top:260px;width:58px;background:#FF5722">查看团队</div>
<div class="bx" style="left:1667px;top:260px;width:34px;background:#1E9FFF">账变</div>
<div class="bx" style="left:1711px;top:260px;width:34px;background:#FF0000">禁用</div>
<div class="bx" style="left:1755px;top:260px;width:34px;background:#FF0000">删除</div>
<div class="bx" style="left:1799px;top:260px;width:58px;background:#008000">设为假人</div>
<svg class="a" style="left:1853px;top:231px" width="26" height="26" viewBox="0 0 26 26">
<circle cx="13" cy="13" r="13" fill="#666"/><path d="M7.6 7.6 L18.4 18.4 M18.4 7.6 L7.6 18.4" stroke="#fff" stroke-width="1.3"/></svg>
<div class="a" style="left:1911px;top:51px;width:1px;height:917px;background:#f7f7f7"></div>
<div class="a" style="left:1912px;top:51px;width:3px;height:917px;background:#cccccc"></div>
<div class="a" style="left:1912px;top:51px;width:3px;height:630px;background:#666"></div>
</body></html>
